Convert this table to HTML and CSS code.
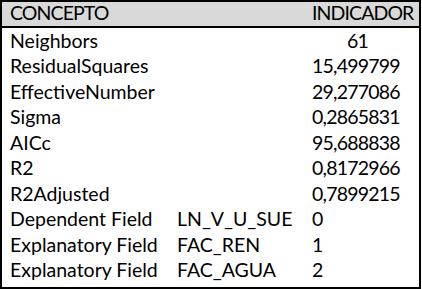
FILE: index.html
```html
<!DOCTYPE html>
<html lang="es">
<head>
<meta charset="utf-8">
<title>Resultados GWR</title>
<link rel="stylesheet" href="styles.css">
</head>
<body>
<table class="grid">
  <colgroup>
    <col class="col-a">
    <col class="col-b">
    <col class="col-c">
  </colgroup>
  <thead>
    <tr class="head">
      <th colspan="2">CONCEPTO</th>
      <th>INDICADOR</th>
    </tr>
  </thead>
  <tbody>
    <tr><td colspan="2">Neighbors</td><td class="num center">61</td></tr>
    <tr><td colspan="2">ResidualSquares</td><td class="num">15,499799</td></tr>
    <tr><td colspan="2">EffectiveNumber</td><td class="num">29,277086</td></tr>
    <tr><td colspan="2">Sigma</td><td class="num">0,2865831</td></tr>
    <tr><td colspan="2">AICc</td><td class="num">95,688838</td></tr>
    <tr><td colspan="2">R2</td><td class="num">0,8172966</td></tr>
    <tr><td colspan="2">R2Adjusted</td><td class="num">0,7899215</td></tr>
    <tr><td>Dependent Field</td><td>LN_V_U_SUE</td><td class="num">0</td></tr>
    <tr><td>Explanatory Field</td><td>FAC_REN</td><td class="num">1</td></tr>
    <tr class="last"><td>Explanatory Field</td><td>FAC_AGUA</td><td class="num">2</td></tr>
  </tbody>
</table>
</body>
</html>
```
FILE: styles.css
```css
html, body {
  margin: 0;
  padding: 0;
  background: #ffffff;
}

.grid {
  border-collapse: separate;
  border-spacing: 0;
  border: 2px solid #000;
  width: 421px;
  table-layout: fixed;
  font-family: Lato, "Open Sans", sans-serif;
  font-size: 19.5px;
  color: #000;
}

.col-a { width: 167px; }
.col-b { width: 135px; }
.col-c { width: 115px; }

.grid th,
.grid td {
  padding: 0 0 0 8px;
  text-align: left;
  font-weight: normal;
  white-space: nowrap;
  vertical-align: top;
}

.head th {
  background: #d9d9d9;
  height: 24px;
  line-height: 22px;
  border-bottom: 2px solid #000;
  letter-spacing: -0.9px;
}

.grid td {
  height: 25.44px;
  line-height: 25.44px;
}

.grid .num {
  letter-spacing: -0.8px;
}

.grid .center {
  text-align: center;
  padding: 0 8px 0 0;
}

.last td {
  height: 30px;
}
```
